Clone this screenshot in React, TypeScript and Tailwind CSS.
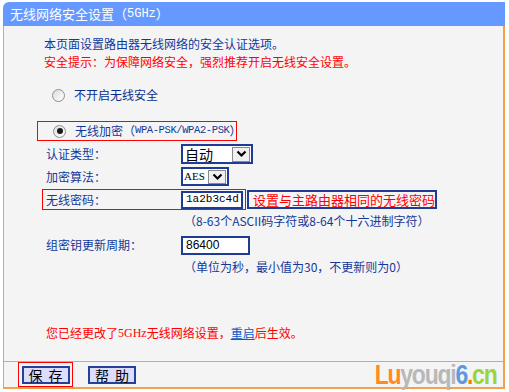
import React from "react";

const cn = { fontFamily: '"Noto Sans CJK SC", "Liberation Sans", sans-serif' };
const mono = { fontFamily: '"Liberation Mono", "Noto Sans CJK SC", monospace' };

function Chevron() {
  return (
    <svg width="11" height="8" viewBox="0 0 11 8">
      <path d="M1.5 1.5 L5.5 5.5 L9.5 1.5" stroke="#000" strokeWidth="2.2" fill="none" />
    </svg>
  );
}

function Radio({ checked }: { checked?: boolean }) {
  return (
    <div className="shrink-0 w-[13px] h-[13px] rounded-full border border-[#8e8f8f] bg-gradient-to-br from-[#dcdcdc] to-white flex items-center justify-center">
      {checked && <div className="w-[6px] h-[6px] rounded-full bg-[#1a1a1a]" />}
    </div>
  );
}

export default function App() {
  return (
    <div className="w-[509px] h-[392px] bg-white pt-[2px] pl-[3px] text-[12px] whitespace-nowrap" style={cn}>
      <div className="w-[502px]">
        <div className="h-[24px] bg-[#6699ff] rounded-tl-[6px] flex items-center pl-[7px] text-white text-[13px]">
          无线网络安全设置（<span className="text-[12px]" style={mono}>5GHz</span>）
        </div>
        <div className="h-[335px] bg-[#f4f4f4] border-l border-r-2 border-[#f5a04c] text-[#12399a]">
          <div className="pl-[40px] pt-[9px] leading-[18px]">
            <div>本页面设置路由器无线网络的安全认证选项。</div>
            <div className="text-[#ff0000]">安全提示：为保障网络安全，强烈推荐开启无线安全设置。</div>
          </div>
          <div className="h-[18px] mt-[15px] pl-[48px] flex items-center gap-[9px]">
            <Radio />
            <span className="text-[#0a2f8a]">不开启无线安全</span>
          </div>
          <div className="mt-[17px] ml-[33px] w-[200px] h-[20px] border border-[#ff0000] flex items-center pl-[15px] gap-[9px]">
            <Radio checked />
            <span className="flex items-center">
              无线加密（<span className="text-[10.5px] tracking-[-0.4px]" style={mono}>WPA-PSK/WPA2-PSK</span>）
            </span>
          </div>
          <div className="mt-[3px] h-[20px] flex items-center">
            <span className="w-[177px] pl-[42px]">认证类型：</span>
            <div className="flex items-center justify-between border-2 border-[#1e3c96] bg-white w-[72px] h-[20px] pl-[2px] pr-[1px]">
              <span className="text-[14px] text-black leading-none">自动</span>
              <div className="w-[18px] h-[15px] bg-[#f0f0f0] border border-[#8a8a8a] flex items-center justify-center">
                <Chevron />
              </div>
            </div>
          </div>
          <div className="mt-[3px] h-[19px] flex items-center">
            <span className="w-[177px] pl-[42px]">加密算法：</span>
            <div className="flex items-center justify-between border-2 border-[#1e3c96] bg-white w-[48px] h-[19px] pl-[1px] pr-[1px]">
              <span className="text-[11px] text-black leading-none" style={{ fontFamily: '"Liberation Serif", serif' }}>AES</span>
              <div className="w-[18px] h-[14px] bg-[#f0f0f0] border border-[#8a8a8a] flex items-center justify-center">
                <Chevron />
              </div>
            </div>
          </div>
          <div className="mt-[3px] h-[21px] flex items-center">
            <div className="ml-[38px] w-[204px] h-[21px] border border-[#ff0000] flex items-center">
              <span className="w-[138px] pl-[3px]">无线密码：</span>
              <div className="w-[62px] h-[18px] border-2 border-[#1e3c96] bg-white flex items-center pl-[3px] text-[11px] text-black" style={mono}>
                1a2b3c4d
              </div>
            </div>
            <div className="ml-[1px] h-[19px] w-[190px] border-2 border-[#1e3c96] flex items-center pl-[4px] text-[#ff0000] text-[13px]">
              设置与主路由器相同的无线密码
            </div>
          </div>
          <div className="mt-[2px] h-[18px] pl-[180px] flex items-center text-[#12399a]">
            （8-63个ASCII码字符或8-64个十六进制字符）
          </div>
          <div className="mt-[6px] h-[18px] flex items-center">
            <span className="w-[177px] pl-[42px]">组密钥更新周期：</span>
            <div className="w-[69px] h-[19px] border-2 border-[#1e3c96] bg-white flex items-center pl-[3px] text-[12px] text-black" style={{ fontFamily: '"Liberation Sans", sans-serif' }}>
              86400
            </div>
          </div>
          <div className="mt-[4px] h-[18px] pl-[180px] flex items-center">
            （单位为秒，最小值为30，不更新则为0）
          </div>
          <div className="mt-[48px] h-[18px] pl-[42px] flex items-center text-[#ff0000]">
            您已经更改了<span style={{ fontFamily: '"Liberation Serif", serif' }}>5GHz</span>无线网络设置，
            <span className="text-[#0a5cc8] underline">重启</span>后生效。
          </div>
        </div>
        <div className="h-[28px] bg-[#f4f4f4] border-t border-l border-r-2 border-b-2 border-[#f5a04c] flex items-center">
          <div className="ml-[14px] w-[55px] h-[25px] border border-[#ff0000] flex items-center justify-center">
            <div className="w-[48px] h-[18px] bg-[#dcdcfc] border-2 border-[#24409a] flex items-center justify-center text-[14px] leading-none text-black gap-[6px]">
              <span>保</span><span>存</span>
            </div>
          </div>
          <div className="ml-[15px] w-[48px] h-[18px] bg-[#dcdcfc] border-2 border-[#24409a] flex items-center justify-center text-[14px] leading-none text-black gap-[6px]">
            <span>帮</span><span>助</span>
          </div>
          <div
            className="ml-auto mr-[7px] text-[28px] font-bold leading-none tracking-[-1.5px] scale-x-[0.82] origin-right"
            style={{ fontFamily: '"Liberation Sans", sans-serif' }}
          >
            <span className="text-[#ff8a1e]">Lu</span>
            <span className="text-[#b8b8b8]">youqi</span>
            <span className="text-[#5b9ae0]">6</span>
            <span className="text-[#ff7a00]">.</span>
            <span className="text-[#9ad43c]">cn</span>
          </div>
        </div>
      </div>
    </div>
  );
}
